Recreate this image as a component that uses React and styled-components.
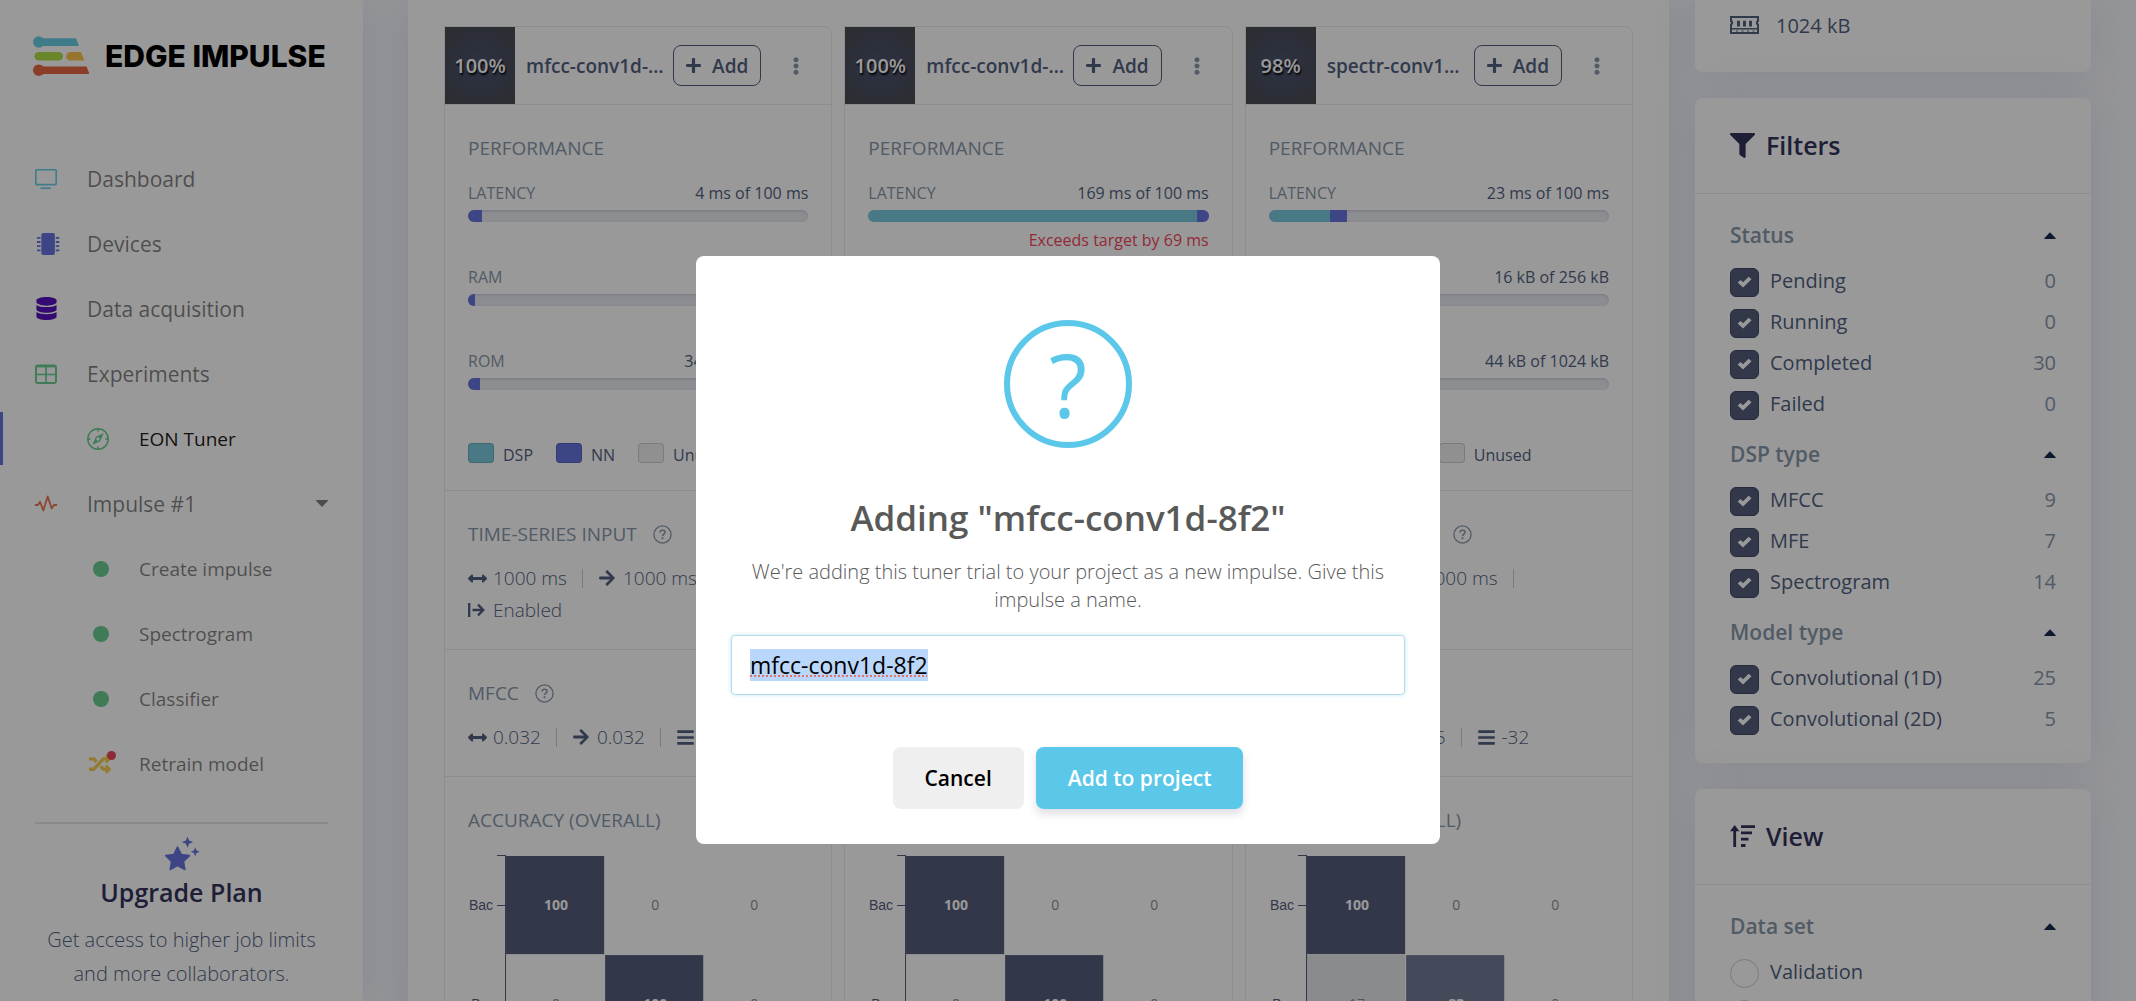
import React, { useEffect, useRef } from "react";
import styled, { createGlobalStyle, css } from "styled-components";
import {
  FaArrowRight,
  FaArrowsAltH,
  FaBars,
  FaDatabase,
  FaEllipsisV,
  FaFilter,
  FaPlus,
  FaRandom,
} from "react-icons/fa";

const color = {
  ink: "#525f7f",
  heading: "#32325d",
  muted: "#8898aa",
  line: "#e9ecef",
  blue: "#6673de",
  teal: "#7bcade",
  sky: "#5bc8ea",
  green: "#69cd8f",
  orange: "#e97757",
  red: "#f5465c",
  cell: "#545c7c",
};

const cardShadow = "0 0 44px rgba(136, 152, 180, 0.2)";

const GlobalStyle = createGlobalStyle`
  *, *::before, *::after { box-sizing: border-box; }
  body {
    margin: 0;
    background: #f8f9fe;
    color: ${color.ink};
    font-family: "Open Sans", "Noto Sans", sans-serif;
    font-size: 20px;
  }
  button, input { font-family: inherit; }
`;

/* ---------- page frame ---------- */

const Page = styled.div`
  display: flex;
  height: 100vh;
  overflow: hidden;
`;

const Sidebar = styled.aside`
  flex: 0 0 363px;
  display: flex;
  flex-direction: column;
  background: #fff;
  box-shadow: ${cardShadow};
`;

const Content = styled.div`
  flex: 1;
  min-width: 0;
  display: flex;
  align-items: flex-start;
  gap: 26px;
  padding: 0 45px;
`;

const Main = styled.main`
  flex: 1;
  min-width: 0;
  display: grid;
  grid-template-columns: repeat(3, minmax(0, 1fr));
  gap: 12px;
  padding: 26px 36px;
  background: #fff;
  box-shadow: ${cardShadow};
`;

const Aside = styled.div`
  flex: 0 0 396px;
  display: flex;
  flex-direction: column;
  gap: 26px;
`;

/* ---------- sidebar ---------- */

const Brand = styled.a`
  display: flex;
  align-items: center;
  gap: 16px;
  height: 112px;
  padding-left: 33px;
  color: #000;
  font: 800 30px/40px Inter, "Open Sans", sans-serif;
  text-decoration: none;
  white-space: nowrap;
`;

const Nav = styled.nav`
  display: flex;
  flex-direction: column;
  padding-top: 34px;
`;

const NavLink = styled.a`
  display: flex;
  align-items: center;
  height: 65px;
  padding: 0 35px;
  color: rgba(0, 0, 0, 0.5);
  font-size: 21px;
  text-decoration: none;

  ${(p) =>
    p.$sub &&
    css`
      padding-left: 87px;
      font-size: 19px;
    `}
  ${(p) =>
    p.$active &&
    css`
      color: rgba(0, 0, 0, 0.9);
      background: linear-gradient(${color.blue}, ${color.blue}) left center / 3px 53px no-repeat;
    `}
`;

const NavIcon = styled.span`
  display: flex;
  align-items: center;
  width: 52px;
  color: ${(p) => p.$color};
`;

const NavLabel = styled.span`
  flex: 1;
`;

const StatusDot = styled.span`
  width: 16px;
  height: 16px;
  margin-left: 6px;
  border-radius: 50%;
  background: ${color.green};
`;

const RetrainIcon = styled.span`
  position: relative;
  display: flex;
  margin-left: 2px;

  &::after {
    content: "";
    position: absolute;
    top: -2px;
    right: -5px;
    width: 9px;
    height: 9px;
    border-radius: 50%;
    background: #ea4660;
  }
`;

const Upgrade = styled.section`
  display: flex;
  flex-direction: column;
  align-items: center;
  margin: 26px 35px 0;
  padding-top: 12px;
  border-top: 2px solid #e6e6ea;
  text-align: center;

  h2 {
    margin: 2px 0 13px;
    color: ${color.heading};
    font-size: 25px;
    font-weight: 600;
    line-height: 36px;
  }
  p {
    margin: 0;
    font-size: 20px;
    font-weight: 300;
    line-height: 34px;
    white-space: nowrap;
  }
`;

/* ---------- trial cards ---------- */

const Card = styled.article`
  border: 1px solid ${color.line};
  border-radius: 0 8px 0 0;
`;

const CardHeader = styled.header`
  display: flex;
  align-items: center;
  height: 78px;
  padding-right: 26px;
  border-bottom: 1px solid ${color.line};
`;

const Score = styled.div`
  flex: 0 0 70px;
  height: 77px;
  background: radial-gradient(circle, #4a5372, #4a4c52 92%);
  color: #fff;
  font-size: 20px;
  font-weight: 600;
  line-height: 77px;
  text-align: center;
  text-shadow: 1px 2px 2px #000;
`;

const TrialName = styled.h3`
  flex: 1;
  min-width: 0;
  margin: 0 8px 0 11px;
  overflow: hidden;
  font-size: 19px;
  font-weight: 600;
  text-overflow: ellipsis;
  white-space: nowrap;
`;

const AddButton = styled.button`
  display: flex;
  align-items: center;
  gap: 10px;
  height: 41px;
  padding: 0 12px 0 11px;
  border: 1px solid ${color.ink};
  border-radius: 8px;
  background: none;
  color: ${color.ink};
  font-size: 19px;
  font-weight: 600;
`;

const MenuButton = styled.button`
  display: flex;
  margin-left: 26px;
  padding: 0;
  border: 0;
  background: none;
  color: ${color.muted};
`;

const Section = styled.section`
  padding: 29px 23px 23px;
  border-bottom: ${(p) => (p.$last ? 0 : 1)}px solid ${color.line};
`;

const SectionTitle = styled.h4`
  display: flex;
  align-items: center;
  gap: 16px;
  margin: 0;
  color: ${color.muted};
  font-size: 19px;
  font-weight: 400;
  line-height: 28px;
`;

const Meter = styled.div`
  height: 84px;
`;

const MeterHead = styled.div`
  display: flex;
  justify-content: space-between;
  font-size: 16px;
  line-height: 28px;

  span:first-child {
    color: ${color.muted};
  }
`;

const Track = styled.div`
  display: flex;
  height: 12px;
  margin-top: 3px;
  overflow: hidden;
  border-radius: 6px;
  background: #e9ecf2;
  box-shadow: inset 0 1px 3px rgba(50, 50, 93, 0.18);
`;

const Fill = styled.div`
  background: ${(p) => p.$color};
`;

const Exceeds = styled.div`
  color: ${color.red};
  font-size: 16px;
  line-height: 36px;
  text-align: right;
`;

const Meters = styled.div`
  padding-top: 17px;
`;

const Legend = styled.div`
  display: flex;
  gap: 23px;
  padding-top: 12px;
  font-size: 16px;
  line-height: 24px;
`;

const LegendItem = styled.span`
  display: flex;
  align-items: center;
  gap: 9px;
`;

const Swatch = styled.span`
  width: 26px;
  height: 20px;
  margin-bottom: 4px;
  border: 1px solid rgba(0, 0, 0, 0.14);
  border-radius: 4px;
  background: ${(p) => p.$color};
`;

const Params = styled.div`
  display: flex;
  flex-wrap: wrap;
  align-items: center;
  padding-top: 14px;
  font-size: 19px;
  font-weight: 300;
  line-height: 32px;
`;

const Param = styled.span`
  display: flex;
  align-items: center;
  white-space: nowrap;
`;

const ParamIcon = styled.span`
  display: flex;
  width: 25px;
`;

const Divider = styled.span`
  width: 1px;
  height: 19px;
  margin: 0 15px;
  background: #cdcdd0;
`;

const Chart = styled.svg`
  display: block;
  width: 100%;
  margin-top: 21px;
  font-family: "Open Sans", sans-serif;
  font-size: 14px;
`;

/* ---------- right column ---------- */

const Panel = styled.section`
  border-radius: 8px;
  background: #fff;
  box-shadow: ${cardShadow};
`;

const TargetPanel = styled(Panel)`
  border-radius: 0 0 8px 8px;
`;

const TargetRow = styled.div`
  display: flex;
  align-items: center;
  gap: 17px;
  height: 72px;
  padding: 0 35px 22px;
  font-size: 20px;
`;

const PanelHeader = styled.header`
  display: flex;
  align-items: center;
  gap: 11px;
  height: 96px;
  padding: 0 35px 1px;
  border-bottom: 1px solid ${color.line};
  color: ${color.heading};

  h2 {
    margin: 0;
    font-size: 25px;
    font-weight: 600;
    line-height: 36px;
  }
`;

const PanelBody = styled.div`
  display: flex;
  flex-direction: column;
  gap: 18px;
  padding: 25px 35px 28px;
`;

const Group = styled.fieldset`
  display: flex;
  flex-direction: column;
  gap: 12px;
  min-width: 0;
  margin: 0;
  padding: 0;
  border: 0;
`;

const GroupTitle = styled.button`
  display: flex;
  align-items: center;
  justify-content: space-between;
  height: 32px;
  margin-bottom: 5px;
  padding: 0;
  border: 0;
  background: none;
  color: ${color.muted};
  font-size: 21px;
  font-weight: 600;
`;

const Option = styled.label`
  display: flex;
  align-items: center;
  gap: 11px;
  height: 29px;
  font-size: 20px;
  line-height: 26px;
`;

const OptionText = styled.span`
  flex: 1;
  padding-bottom: 3px;
`;

const Count = styled.span`
  padding-bottom: 3px;
  color: ${color.muted};
`;

const checkMark =
  "polygon(12% 50%, 28% 34%, 42% 49%, 73% 14%, 89% 30%, 42% 82%)";

const Check = styled.input`
  appearance: none;
  display: grid;
  place-items: center;
  width: 29px;
  height: 29px;
  margin: 0;
  border: 1px solid #424a66;
  border-radius: ${(p) => (p.type === "radio" ? "50%" : "6px")};
  background: ${color.cell};

  &::after {
    content: "";
    width: 18px;
    height: 16px;
    background: #fff;
    clip-path: ${checkMark};
  }

  &[type="radio"] {
    border-color: #c9ccd6;
    background: #fff;
  }
`;

/* ---------- dialog ---------- */

const Overlay = styled.div`
  position: fixed;
  inset: 0;
  display: flex;
  align-items: flex-start;
  justify-content: center;
  padding-top: 256px;
  background: rgba(0, 0, 0, 0.4);
`;

const Dialog = styled.form`
  display: flex;
  flex-direction: column;
  align-items: center;
  width: 744px;
  padding: 64px 35px 35px;
  border-radius: 8px;
  background: #fff;
  color: #595959;
  text-align: center;

  h2 {
    margin: 42px 0 0;
    font-size: 35px;
    font-weight: 600;
    line-height: 56px;
  }
  p {
    margin: 12px 0 21px;
    font-size: 20px;
    font-weight: 300;
    line-height: 28px;
  }
`;

const QuestionMark = styled.div`
  width: 128px;
  height: 128px;
  border: 6px solid ${color.sky};
  border-radius: 50%;
  color: ${color.sky};
  font-size: 88px;
  line-height: 116px;
`;

const NameInput = styled.input`
  width: 100%;
  height: 60px;
  margin-bottom: 52px;
  padding: 0 18px;
  border: 1px solid #b4dbed;
  border-radius: 4px;
  outline: 0;
  box-shadow: 0 0 4px #c4e6f5;
  color: #000;
  font-size: 23px;
  text-underline-offset: 4px;

  &::selection {
    background: #b9d6fb;
    text-decoration: underline dotted #e8706c 2px;
  }
`;

const Actions = styled.div`
  display: flex;
  gap: 12px;
`;

const DialogButton = styled.button`
  height: 62px;
  padding: 0 32px;
  border: 0;
  border-radius: 8px;
  background: ${(p) => (p.$primary ? color.sky : "#efefef")};
  box-shadow: ${(p) => (p.$primary ? "0 5px 8px rgba(50, 50, 93, 0.16)" : "none")};
  color: ${(p) => (p.$primary ? "#fff" : "#000")};
  font-size: 21px;
  font-weight: 600;
`;

/* ---------- drawings ---------- */

const Logo = () => (
  <svg width="56" height="40" viewBox="0 0 56 40" aria-hidden="true">
    <g fill="#6bcde6">
      <circle cx="5.8" cy="6" r="5.8" />
      <path d="M5 2.3h38l3 7.7H5z" />
    </g>
    <rect x="1.5" y="16" width="28.5" height="8.6" rx="4.3" fill="#b1df47" />
    <path d="M37.5 16H48l3.3 8.6H37.5a4.3 4.3 0 0 1 0-8.6z" fill="#fdc44b" />
    <g fill="#e96743">
      <circle cx="5.8" cy="34.2" r="5.8" />
      <path d="M5 30.6h48.5l3 7.4H5z" />
    </g>
  </svg>
);

const MonitorIcon = () => (
  <svg width="22" height="22" viewBox="0 0 22 22" fill="none" stroke="currentColor" strokeWidth="1.6" aria-hidden="true">
    <rect x="0.8" y="1.8" width="20.4" height="14.8" rx="0.8" />
    <path d="M5.5 20.2h10.5" />
  </svg>
);

const ChipIcon = () => (
  <svg width="26" height="22" viewBox="0 0 26 22" aria-hidden="true">
    <rect x="6.3" y="0" width="13.6" height="22" rx="2" fill="currentColor" />
    <path
      d="M2 4.8h3.5M2 9h3.5M2 13.2h3.5M2 17.4h3.5M20.8 4.8h3.5M20.8 9h3.5M20.8 13.2h3.5M20.8 17.4h3.5"
      stroke="currentColor"
      strokeWidth="1.8"
    />
  </svg>
);

const TableIcon = () => (
  <svg width="22" height="20" viewBox="0 0 22 20" fill="none" stroke="currentColor" aria-hidden="true">
    <rect x="1" y="1.5" width="20" height="17.5" rx="1.5" strokeWidth="1.9" />
    <path d="M1 2.2h20" strokeWidth="2.4" />
    <path d="M1 10.5h20M11 2v17" strokeWidth="1.6" />
  </svg>
);

const CompassIcon = () => (
  <svg width="22" height="22" viewBox="0 0 22 22" fill="none" stroke="currentColor" strokeWidth="1.5" aria-hidden="true">
    <circle cx="11" cy="11" r="10.2" />
    <path d="M11 1v2.6M11 18.4V21M1 11h2.6M18.4 11H21" />
    <path
      d="M16.6 5.2l-7.6 3.4-3.6 8.2 7.8-3.6zM11 9.3a1.7 1.7 0 1 1 0 3.4 1.7 1.7 0 0 1 0-3.4z"
      fill="currentColor"
      fillRule="evenodd"
      stroke="none"
    />
  </svg>
);

const PulseIcon = () => (
  <svg width="22" height="18" viewBox="0 0 22 18" fill="none" stroke="currentColor" strokeWidth="1.8" strokeLinejoin="round" aria-hidden="true">
    <path d="M0 10h3l2-3.3L8.3 15.5 12.7 1.5l4 12 2.3-3.5h3" />
  </svg>
);

const StarIcon = () => (
  <svg width="36" height="36" viewBox="0 0 36 36" fill={color.blue} aria-hidden="true">
    <path
      d="M13.5 11l3.7 7.4 8.2 1.2-5.9 5.8 1.4 8.1-7.4-3.9-7.3 3.9 1.4-8.1-5.9-5.8 8.2-1.2z"
      stroke={color.blue}
      strokeWidth="1.5"
      strokeLinejoin="round"
    />
    <path d="M23.5 0.5l1.6 4 4 1.6-4 1.6-1.6 4-1.6-4-4-1.6 4-1.6zM31.2 11.2l1.3 3.2 3.2 1.3-3.2 1.3-1.3 3.2-1.3-3.2-3.2-1.3 3.2-1.3z" />
  </svg>
);

const Caret = ({ up }) => (
  <svg width="12" height="7" viewBox="0 0 12 7" aria-hidden="true">
    {up ? (
      <path d="M6 0.3L11.7 6.2V7H0.3V6.2z" fill="#172b4d" />
    ) : (
      <path d="M0 0h12v0.8L6 7 0 0.8z" fill="currentColor" />
    )}
  </svg>
);

const HelpIcon = () => (
  <svg width="19" height="19" viewBox="0 0 19 19" fill="none" stroke={color.muted} role="img" aria-label="Help">
    <circle cx="9.5" cy="9.5" r="8.6" strokeWidth="1.3" />
    <path d="M7 7.4C7.2 4.6 12 4.6 12 7.4c0 1.8-2.5 1.6-2.5 3.6" strokeWidth="1.5" />
    <path d="M9.5 12.3v1.9" strokeWidth="1.8" />
  </svg>
);

const FromLineIcon = () => (
  <svg width="17" height="16" viewBox="0 0 17 16" fill="none" stroke="currentColor" strokeWidth="2.3" aria-hidden="true">
    <path d="M1.2 1v14M4.5 8h10.5M10 2.6L15.3 8 10 13.4" />
  </svg>
);

const MemoryIcon = () => (
  <svg width="29" height="18" viewBox="0 0 29 18" fill="none" stroke="currentColor" aria-hidden="true">
    <path d="M1 1h27v4a1.8 1.8 0 0 0 0 3.4V17H1V8.4A1.8 1.8 0 0 0 1 5z" strokeWidth="2" />
    <path d="M1 12.8h27" strokeWidth="1.5" />
    <path d="M8.5 4.8v5.7M14.5 4.8v5.7M20.5 4.8v5.7" strokeWidth="3" />
    <path d="M6 15h2M11.5 15h2M17 15h2M22.5 15h2" strokeWidth="1.2" />
  </svg>
);

const SortIcon = () => (
  <svg width="25" height="22" viewBox="0 0 25 22" fill="none" stroke="currentColor" strokeWidth="2.8" aria-hidden="true">
    <path d="M4.7 5v17" />
    <path d="M4.7 0l4.7 6.2H0z" fill="currentColor" stroke="none" />
    <path d="M11 1.6h14M11 7.9h11M11 14.2h7.5M11 20.5h4.5" />
  </svg>
);

/* ---------- data ---------- */

const navItems = [
  { label: "Dashboard", icon: <MonitorIcon />, color: "#6bd0ea" },
  { label: "Devices", icon: <ChipIcon />, color: color.blue },
  { label: "Data acquisition", icon: <FaDatabase size={23} />, color: "#5710be" },
  { label: "Experiments", icon: <TableIcon />, color: color.green },
  { label: "EON Tuner", icon: <CompassIcon />, color: color.green, sub: true, active: true },
  { label: "Impulse #1", icon: <PulseIcon />, color: color.orange, open: true },
  { label: "Create impulse", icon: <StatusDot />, sub: true },
  { label: "Spectrogram", icon: <StatusDot />, sub: true },
  { label: "Classifier", icon: <StatusDot />, sub: true },
  {
    label: "Retrain model",
    icon: (
      <RetrainIcon>
        <FaRandom size={22} />
      </RetrainIcon>
    ),
    color: "#f5cf52",
    sub: true,
  },
];

const trials = [
  {
    score: "100%",
    name: "mfcc-conv1d-8f2",
    meters: [
      { label: "LATENCY", value: "4 ms of 100 ms", dsp: 0, nn: 4 },
      { label: "RAM", value: "5 kB of 256 kB", dsp: 0, nn: 2 },
      { label: "ROM", value: "34 kB of 1024 kB", dsp: 0, nn: 3.5 },
    ],
    dspName: "MFCC",
    dspParams: ["0.032", "0.032", "32"],
    matrix: [
      [100, 0, 0],
      [0, 100, 0],
    ],
  },
  {
    score: "100%",
    name: "mfcc-conv1d-a41",
    meters: [
      { label: "LATENCY", value: "169 ms of 100 ms", dsp: 96.5, nn: 3.5, exceeds: "Exceeds target by 69 ms" },
      { label: "RAM", value: "16 kB of 256 kB", dsp: 4, nn: 2 },
      { label: "ROM", value: "44 kB of 1024 kB", dsp: 0, nn: 4 },
    ],
    dspName: "MFCC",
    dspParams: ["0.032", "0.016", "32"],
    matrix: [
      [100, 0, 0],
      [0, 100, 0],
    ],
  },
  {
    score: "98%",
    name: "spectr-conv1d-b70",
    meters: [
      { label: "LATENCY", value: "23 ms of 100 ms", dsp: 18, nn: 5 },
      { label: "RAM", value: "16 kB of 256 kB", dsp: 4, nn: 2 },
      { label: "ROM", value: "44 kB of 1024 kB", dsp: 0, nn: 4 },
    ],
    dspName: "SPECTROGRAM",
    dspParams: ["0.025", "0.025", "-32"],
    matrix: [
      [100, 0, 0],
      [17, 83, 0],
    ],
  },
];

const filterGroups = [
  { title: "Status", options: [["Pending", 0], ["Running", 0], ["Completed", 30], ["Failed", 0]] },
  { title: "DSP type", options: [["MFCC", 9], ["MFE", 7], ["Spectrogram", 14]] },
  { title: "Model type", options: [["Convolutional (1D)", 25], ["Convolutional (2D)", 5]] },
];

const cellFill = (v) => (v === 100 ? color.cell : v > 50 ? "#727c94" : v > 0 ? "#e5e8ea" : "#fff");

/* ---------- composed parts ---------- */

const ConfusionChart = ({ rows }) => (
  <Chart viewBox="0 0 340 300" role="img" aria-label="Confusion matrix">
    {rows.map((row, r) =>
      row.map((v, c) => {
        const x = 38 + c * 99;
        const y = 1 + r * 99;
        return (
          <g key={`${r}-${c}`}>
            <rect x={x} y={y} width="98" height="98" fill={cellFill(v)} />
            <text
              x={x + 50}
              y={y + 54}
              textAnchor="middle"
              fontWeight={v > 50 ? 700 : 400}
              fill={v > 50 ? "#fff" : "#8f8f8f"}
            >
              {v}
            </text>
          </g>
        );
      })
    )}
    <path d="M29 0.5h8.5V300M29 50.5h8.5M29 149.5h8.5" fill="none" stroke={color.cell} />
    {["Bac", "Bar"].map((name, i) => (
      <text key={name} x="25" y={55 + i * 99} textAnchor="end" fill={color.cell} fontFamily="Liberation Sans, sans-serif">
        {name}
      </text>
    ))}
  </Chart>
);

const ParamList = ({ items }) => (
  <Params>
    {items.map(([icon, text], i) => (
      <React.Fragment key={i}>
        <Param>
          <ParamIcon>{icon}</ParamIcon>
          {text}
        </Param>
        {i < items.length - 1 && <Divider />}
      </React.Fragment>
    ))}
  </Params>
);

const TrialCard = ({ trial }) => (
  <Card>
    <CardHeader>
      <Score>{trial.score}</Score>
      <TrialName>{trial.name}</TrialName>
      <AddButton type="button">
        <FaPlus size={17} />
        Add
      </AddButton>
      <MenuButton type="button" aria-label="More actions">
        <FaEllipsisV size={18} />
      </MenuButton>
    </CardHeader>
    <Section>
      <SectionTitle>PERFORMANCE</SectionTitle>
      <Meters>
        {trial.meters.map((m) => (
          <Meter key={m.label}>
            <MeterHead>
              <span>{m.label}</span>
              <span>{m.value}</span>
            </MeterHead>
            <Track>
              <Fill $color={color.teal} style={{ width: `${m.dsp}%` }} />
              <Fill $color={color.blue} style={{ width: `${m.nn}%` }} />
            </Track>
            {m.exceeds && <Exceeds>{m.exceeds}</Exceeds>}
          </Meter>
        ))}
      </Meters>
      <Legend>
        <LegendItem>
          <Swatch $color={color.teal} />
          DSP
        </LegendItem>
        <LegendItem>
          <Swatch $color={color.blue} />
          NN
        </LegendItem>
        <LegendItem>
          <Swatch $color="#f0f0f0" />
          Unused
        </LegendItem>
      </Legend>
    </Section>
    <Section>
      <SectionTitle>
        TIME-SERIES INPUT <HelpIcon />
      </SectionTitle>
      <ParamList
        items={[
          [<FaArrowsAltH size={19} />, "1000 ms"],
          [<FaArrowRight size={18} />, "1000 ms"],
          [<FromLineIcon />, "Enabled"],
        ]}
      />
    </Section>
    <Section>
      <SectionTitle>
        {trial.dspName} <HelpIcon />
      </SectionTitle>
      <ParamList
        items={[
          [<FaArrowsAltH size={19} />, trial.dspParams[0]],
          [<FaArrowRight size={18} />, trial.dspParams[1]],
          [<FaBars size={19} />, trial.dspParams[2]],
        ]}
      />
    </Section>
    <Section $last>
      <SectionTitle>ACCURACY (OVERALL)</SectionTitle>
      <ConfusionChart rows={trial.matrix} />
    </Section>
  </Card>
);

const OptionGroup = ({ title, children }) => (
  <Group>
    <GroupTitle type="button">
      {title}
      <Caret up />
    </GroupTitle>
    {children}
  </Group>
);

const AddDialog = () => {
  const inputRef = useRef(null);

  useEffect(() => {
    inputRef.current.focus();
    inputRef.current.select();
  }, []);

  return (
    <Overlay>
      <Dialog role="dialog" aria-labelledby="dialog-title" onSubmit={(e) => e.preventDefault()}>
        <QuestionMark aria-hidden="true">?</QuestionMark>
        <h2 id="dialog-title">Adding "mfcc-conv1d-8f2"</h2>
        <p id="dialog-text">
          We're adding this tuner trial to your project as a new impulse. Give this impulse a name.
        </p>
        <NameInput ref={inputRef} type="text" aria-labelledby="dialog-text" defaultValue="mfcc-conv1d-8f2" />
        <Actions>
          <DialogButton type="button">Cancel</DialogButton>
          <DialogButton type="submit" $primary>
            Add to project
          </DialogButton>
        </Actions>
      </Dialog>
    </Overlay>
  );
};

export default function App() {
  return (
    <>
      <GlobalStyle />
      <Page>
        <Sidebar>
          <Brand href="#">
            <Logo />
            EDGE IMPULSE
          </Brand>
          <Nav>
            {navItems.map((item) => (
              <NavLink key={item.label} href="#" $sub={item.sub} $active={item.active}>
                <NavIcon $color={item.color}>{item.icon}</NavIcon>
                <NavLabel>{item.label}</NavLabel>
                {item.open && <Caret />}
              </NavLink>
            ))}
          </Nav>
          <Upgrade>
            <StarIcon />
            <h2>Upgrade Plan</h2>
            <p>
              Get access to higher job limits
              <br />
              and more collaborators.
            </p>
          </Upgrade>
        </Sidebar>
        <Content>
          <Main>
            {trials.map((trial) => (
              <TrialCard key={trial.name} trial={trial} />
            ))}
          </Main>
          <Aside>
            <TargetPanel>
              <TargetRow>
                <MemoryIcon />
                1024 kB
              </TargetRow>
            </TargetPanel>
            <Panel>
              <PanelHeader>
                <FaFilter size={25} />
                <h2>Filters</h2>
              </PanelHeader>
              <PanelBody>
                {filterGroups.map((group) => (
                  <OptionGroup key={group.title} title={group.title}>
                    {group.options.map(([label, count]) => (
                      <Option key={label}>
                        <Check type="checkbox" defaultChecked />
                        <OptionText>{label}</OptionText>
                        <Count>{count}</Count>
                      </Option>
                    ))}
                  </OptionGroup>
                ))}
              </PanelBody>
            </Panel>
            <Panel>
              <PanelHeader>
                <SortIcon />
                <h2>View</h2>
              </PanelHeader>
              <PanelBody>
                <OptionGroup title="Data set">
                  {["Validation", "Test"].map((label) => (
                    <Option key={label}>
                      <Check type="radio" name="data-set" />
                      <OptionText>{label}</OptionText>
                    </Option>
                  ))}
                </OptionGroup>
              </PanelBody>
            </Panel>
          </Aside>
        </Content>
      </Page>
      <AddDialog />
    </>
  );
}
